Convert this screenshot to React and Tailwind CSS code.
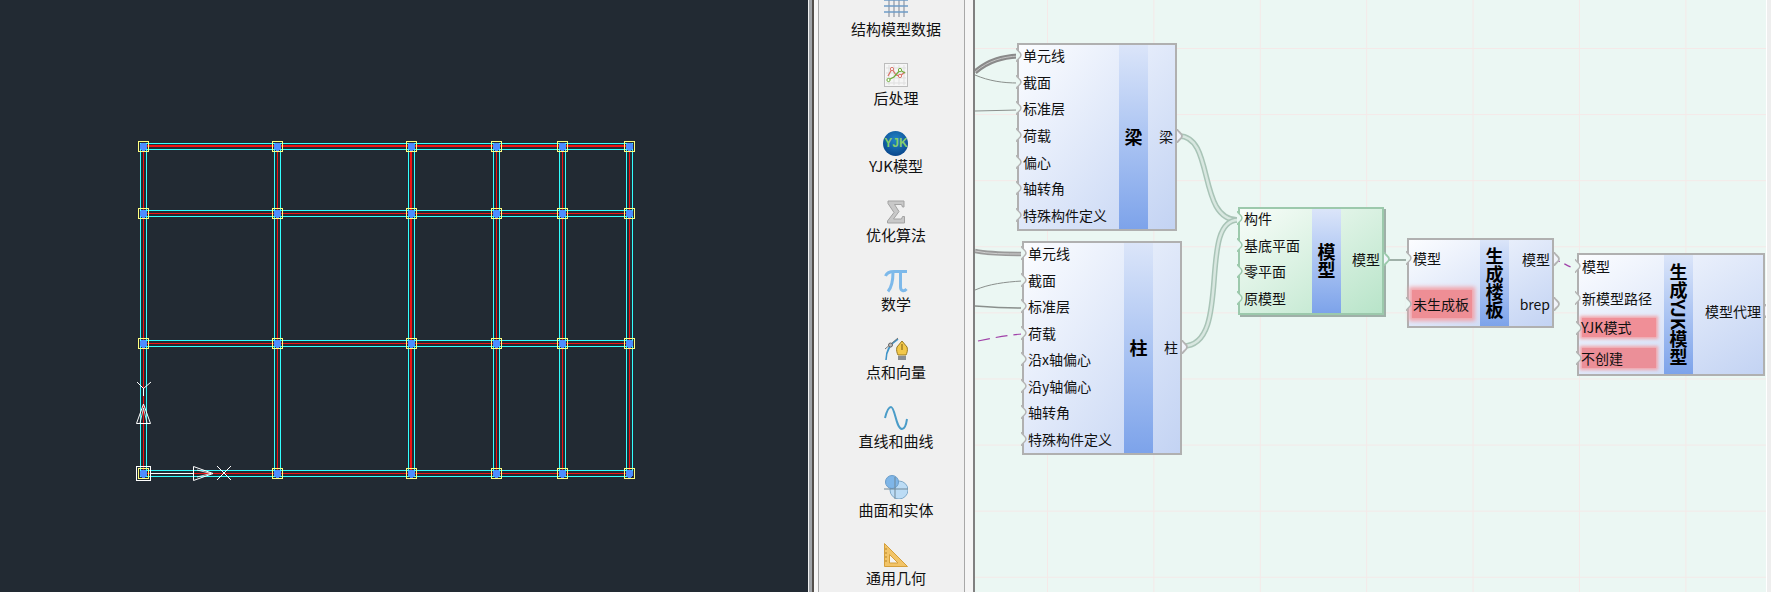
import React from "react";

const colXs = [143, 277, 411, 496, 562, 629];
const rowYs = [146, 213, 343, 473];

function CadGrid() {
  const top = rowYs[0];
  const bottom = rowYs[3];
  const left = colXs[0];
  const right = colXs[5];
  return (
    <svg width="808" height="592" shapeRendering="crispEdges">
      {colXs.map((x, i) => (
        <g key={x}>
          <path d={`M${x - 3 + 0.5} ${top - 3}V${bottom + 3}M${x + 3 + 0.5} ${top - 3}V${bottom + 3}`} stroke="#33ffff" fill="none" />
          <path d={`M${i === 2 ? x : x + 0.5} ${top}V${bottom}`} stroke="#f01414" strokeWidth={i === 2 ? 2 : 1} fill="none" />
        </g>
      ))}
      {rowYs.map((y, i) => (
        <g key={y}>
          <path d={`M${left - 3} ${y - 3 + 0.5}H${right + 3}M${left - 3} ${y + 3 + 0.5}H${right + 3}`} stroke="#33ffff" fill="none" />
          <path d={`M${left} ${i === 0 ? y : y + 0.5}H${right}`} stroke="#f01414" strokeWidth={i === 0 ? 2 : 1} fill="none" />
        </g>
      ))}
      {colXs.map((x) =>
        rowYs.map((y) => (
          <g key={`${x}-${y}`}>
            <path d={`M${x - 2} ${y - 3}h5v1h1v5h-1v1h-1v1h-3v-1h-1v-1h-1v-5h1z`} fill="#4d8dff" />
            <rect x={x - 4.5} y={y - 4.5} width="10" height="10" fill="none" stroke="#ffff80" />
          </g>
        ))
      )}
      {/* ucs icon */}
      <g stroke="#fff" fill="none">
        <rect x="136.5" y="466.5" width="14" height="14" />
        <path d="M143.5 388V396" />
        <path d="M143.5 404L136.5 423.5H150.5Z" shapeRendering="auto" />
        <path d="M143.5 408L140 423M143.5 408L147 423" shapeRendering="auto" strokeWidth="0.8" />
        <path d="M137 382L143.5 388.5L151 382" shapeRendering="auto" />
        <path d="M150 473.5H193" />
        <path d="M193.5 466.5V480.5L213 473.5Z" shapeRendering="auto" />
        <path d="M197 470L211 473.5M197 477L211 473.5" shapeRendering="auto" strokeWidth="0.8" />
        <path d="M217 466L231 480M231 466L217 480" shapeRendering="auto" />
      </g>
    </svg>
  );
}

function GridIcon() {
  return (
    <svg width="24" height="24" viewBox="0 0 24 24" fill="none">
      <path d="M5 0V23M10 0V23M15 0V23M20 0V23" stroke="#8f97a3" strokeWidth="1.2" />
      <path d="M0 6H24M0 12H24M0 18H24" stroke="#6f9cc6" strokeWidth="1.4" />
    </svg>
  );
}

function ChartIcon() {
  return (
    <svg width="24" height="24" viewBox="0 0 24 24" fill="none">
      <rect x="0.5" y="0.5" width="23" height="23" fill="#f6f6f6" stroke="#bdbdbd" />
      <path d="M5 2V22M10 2V22M15 2V22M20 2V22M2 5H22M2 10H22M2 15H22M2 20H22" stroke="#dfdfdf" />
      <path d="M4 13L8 6L12 12L16 13L21 9" stroke="#d9746a" strokeWidth="1.3" />
      <path d="M4 17L10 14L16 7L21 10" stroke="#6fae3c" strokeWidth="1.3" />
      <circle cx="8" cy="6" r="1.6" fill="#fff" stroke="#d9746a" />
      <circle cx="16" cy="13" r="1.6" fill="#fff" stroke="#d9746a" />
      <circle cx="4.500" cy="17" r="1.6" fill="#fff" stroke="#6fae3c" />
      <circle cx="16" cy="7" r="1.6" fill="#fff" stroke="#6fae3c" />
    </svg>
  );
}

function YjkIcon() {
  return (
    <div className="w-[25px] h-[25px] shrink-0 rounded-full bg-[radial-gradient(circle_at_50%_35%,#2285c8,#0a4a90_75%)] flex items-center justify-center text-[12px] leading-none font-bold text-[#86cc6c] font-['Liberation_Sans',sans-serif]">
      YJK
    </div>
  );
}

function SigmaIcon() {
  return (
    <svg width="24" height="24" viewBox="0 0 24 24">
      <path d="M4 1H20V7H18.500L17.500 4.500H10.500L15 11.500L9.500 19H17.500L18.500 16.500H20.500V23H3.500V21L10 12.500L4 3.500Z" fill="#c8c8c8" stroke="#a2a2a2" />
    </svg>
  );
}

function PiIcon() {
  return (
    <svg width="24" height="24" viewBox="0 0 24 24" fill="none" stroke="#7db9ea" strokeWidth="3">
      <path d="M1.500 7C3 3.500 6 2.500 10 2.500H23" />
      <path d="M9 3C9 12 8 18 4 22.500" />
      <path d="M16.500 3V18C16.500 22 20 23 22.500 20" />
    </svg>
  );
}

function PenIcon() {
  return (
    <svg width="24" height="24" viewBox="0 0 24 24" fill="none">
      <path d="M2 23C2 13 6 7 14 2" stroke="#3f94c8" strokeWidth="1.6" />
      <path d="M1 12L14 1" stroke="#777" />
      <circle cx="6.500" cy="8" r="2" fill="#bbb" stroke="#666" />
      <path d="M18 4L23 10C24 13 23 16 22 18H14C13 16 12 13 13 10Z" fill="#f3c84a" stroke="#9a7a20" />
      <path d="M18 7V13" stroke="#7a5c10" />
      <rect x="14" y="19" width="8" height="4" fill="#8a8f94" />
    </svg>
  );
}

function SineIcon() {
  return (
    <svg width="24" height="24" viewBox="0 0 24 24" fill="none">
      <path d="M1 12C3 4 5 1 7 1C11 1 12 23 18 23C20 23 22 20 23 13" stroke="#4a9cc8" strokeWidth="2" />
    </svg>
  );
}

function SolidIcon() {
  return (
    <svg width="24" height="24" viewBox="0 0 24 24" fill="none">
      <circle cx="15" cy="15" r="9" fill="#bcdcf5" stroke="#7fa9c9" />
      <circle cx="8" cy="7" r="6.500" fill="#7fb6e8" stroke="#6a9cc8" />
      <path d="M11 2V24M0 14H24" stroke="#6f8797" />
    </svg>
  );
}

function SquareIcon() {
  return (
    <svg width="24" height="24" viewBox="0 0 24 24" fill="none">
      <path d="M0.500 0.500L23.500 23.500H0.500Z" fill="#f2c468" stroke="#d59f3a" />
      <path d="M5.500 11.500L14 20H5.500Z" fill="#f4f4f4" stroke="#d59f3a" />
      <path d="M1 6H3M1 10H3M1 14H3M1 18H3" stroke="#b98526" />
    </svg>
  );
}

const tools = [
  { label: "结构模型数据", icon: <GridIcon /> },
  { label: "后处理", icon: <ChartIcon /> },
  { label: "YJK模型", icon: <YjkIcon /> },
  { label: "优化算法", icon: <SigmaIcon /> },
  { label: "数学", icon: <PiIcon /> },
  { label: "点和向量", icon: <PenIcon /> },
  { label: "直线和曲线", icon: <SineIcon /> },
  { label: "曲面和实体", icon: <SolidIcon /> },
  { label: "通用几何", icon: <SquareIcon /> },
];

function InGrip({ color = "#b4b4b4" }) {
  return (
    <svg width="6" height="14" viewBox="0 0 6 14" className="absolute -left-[3px] top-px">
      <path d="M0 0C1 3 5 4 5 7C5 10 1 11 0 14" fill="#ebf7f3" stroke={color} strokeWidth="1.5" />
    </svg>
  );
}

function OutGrip({ color = "#b4b4b4" }) {
  return (
    <svg width="6" height="14" viewBox="0 0 6 14" className="absolute -right-[8px] top-px">
      <path d="M0 0C1 3 5 4 5 7C5 10 1 11 0 14" fill="#f1f4fb" stroke={color} strokeWidth="1.8" />
    </svg>
  );
}

function Row({ text, color }) {
  return (
    <div className="relative h-[16px] pl-1 leading-[16px] whitespace-nowrap">
      <InGrip color={color} />
      {text}
    </div>
  );
}

function OutRow({ text, color }) {
  return (
    <div className="relative h-[16px] leading-[16px] whitespace-nowrap text-right pr-[2px]">
      {text}
      <OutGrip color={color} />
    </div>
  );
}

const stripClass =
  "flex items-center justify-center bg-gradient-to-b from-[#dbe5f9] to-[#7da3ea] text-[18px] leading-[18px] font-bold text-black";

const beamInputs = ["单元线", "截面", "标准层", "荷载", "偏心", "轴转角", "特殊构件定义"];
const columnInputs = ["单元线", "截面", "标准层", "荷载", "沿x轴偏心", "沿y轴偏心", "轴转角", "特殊构件定义"];
const modelInputs = ["构件", "基底平面", "零平面", "原模型"];

function Wires() {
  return (
    <svg width="791" height="592" fill="none" className="absolute left-0 top-0">
      {/* bundles coming in from the left */}
      <path d="M0 72C14 60 28 57 43 56" stroke="#8a8a8a" strokeWidth="5" />
      <path d="M0 72C14 60 28 57 43 56" stroke="#c4c4c4" strokeWidth="1" />
      <path d="M0 75C14 81 28 83 43 83" stroke="#8a8f8c" strokeWidth="1" />
      <path d="M0 111L43 110" stroke="#8a8f8c" strokeWidth="1" />
      <path d="M0 251C14 254 30 254 47 254" stroke="#9a9a9a" strokeWidth="4.500" />
      <path d="M0 251C14 254 30 254 47 254" stroke="#d0d0d0" strokeWidth="1" />
      <path d="M0 290C14 284 30 282 47 281" stroke="#8a8f8c" strokeWidth="1" />
      <path d="M0 306C14 307 30 308 47 308" stroke="#8a8f8c" strokeWidth="1.500" />
      <path d="M3 341C18 338 32 335 47 334" stroke="#a040a8" strokeWidth="1.200" strokeDasharray="12 6" />
      {/* beam and column into model */}
      <path d="M204 136C240 136 222 220 263 220" stroke="#a9c4b7" strokeWidth="5.500" />
      <path d="M204 136C240 136 222 220 263 220" stroke="#d8e7e0" strokeWidth="2.500" />
      <path d="M208 346C258 346 222 220 263 220" stroke="#a9c4b7" strokeWidth="5.500" />
      <path d="M208 346C258 346 222 220 263 220" stroke="#d8e7e0" strokeWidth="2.500" />
      {/* model to slab, slab to yjk */}
      <path d="M410 260H432" stroke="#9fb0a8" strokeWidth="2" />
      <path d="M578 260C586 260 592 267 602 269" stroke="#a040a8" strokeWidth="1.200" strokeDasharray="7 5" />
    </svg>
  );
}

function Canvas() {
  return (
    <div className="relative w-[791px] h-full overflow-hidden bg-[#ebf7f3] bg-[linear-gradient(#f5e9e8_1px,transparent_1px),linear-gradient(90deg,#f5e9e8_1px,transparent_1px)] bg-size-[106.4px_66.1px] bg-position-[72px_48px] text-[14px] text-[#111]">
      <Wires />

      <div className="absolute left-[42px] top-[43px] w-[160px] h-[188px] flex border-2 border-[#b0b0b0] bg-gradient-to-br from-[#fcfdff] to-[#c3d3f3]">
        <div className="flex-1 flex flex-col gap-[10.67px] pt-[2px]">
          {beamInputs.map((t, i) => (
            <Row key={i} text={t} />
          ))}
        </div>
        <div className={`w-[29px] pb-[3px] ${stripClass}`}>梁</div>
        <div className="w-[27px] flex flex-col justify-center pb-[3px]">
          <OutRow text="梁" />
        </div>
      </div>

      <div className="absolute left-[47px] top-[241px] w-[160px] h-[214px] flex border-2 border-[#b0b0b0] bg-gradient-to-br from-[#fcfdff] to-[#c3d3f3]">
        <div className="flex-1 flex flex-col gap-[10.5px] pt-[2px]">
          {columnInputs.map((t, i) => (
            <Row key={i} text={t} />
          ))}
        </div>
        <div className={`w-[29px] pb-[3px] ${stripClass}`}>柱</div>
        <div className="w-[27px] flex flex-col justify-center pb-[3px]">
          <OutRow text="柱" />
        </div>
      </div>

      <div className="absolute left-[263px] top-[207px] w-[146px] h-[108px] flex border-2 border-[#9cc9ac] bg-gradient-to-br from-[#f8fdf9] to-[#b8e4c9] shadow-[2px_2px_0_#9fb0a8]">
        <div className="flex-1 flex flex-col gap-[10.67px] pt-[1px]">
          {modelInputs.map((t, i) => (
            <Row key={i} text={t} color="#9cc9ac" />
          ))}
        </div>
        <div className={`w-[29px] ${stripClass}`}>
          <span className="[writing-mode:vertical-rl]">模型</span>
        </div>
        <div className="w-[41px] flex flex-col justify-center pb-1">
          <OutRow text="模型" color="#9cc9ac" />
        </div>
      </div>

      <div className="absolute left-[432px] top-[238px] w-[147px] h-[90px] flex border-2 border-[#b0b0b0] bg-gradient-to-br from-[#fcfdff] to-[#c3d3f3]">
        <div className="flex-1 flex flex-col pt-[10px]">
          <Row text="模型" />
          <div className="relative mt-[24px] ml-[3px] mr-[8px] h-[28px] px-px leading-[28px] whitespace-nowrap bg-[#ee8e95] shadow-[0_0_4px_3px_#f2a5ab]">
            <svg width="6" height="14" viewBox="0 0 6 14" className="absolute -left-[6px] top-[7px]">
              <path d="M0 0C1 3 5 4 5 7C5 10 1 11 0 14" fill="#ebf7f3" stroke="#b4b4b4" strokeWidth="1.5" />
            </svg>
            未生成板
          </div>
        </div>
        <div className={`w-[29px] ${stripClass}`}>
          <span className="[writing-mode:vertical-rl]">生成楼板</span>
        </div>
        <div className="w-[43px] flex flex-col pt-[11px] gap-[29px]">
          <OutRow text="模型" />
          <OutRow text="brep" />
        </div>
      </div>

      <div className="absolute left-[602px] top-[253px] w-[188px] h-[123px] flex border-2 border-[#b0b0b0] bg-gradient-to-br from-[#fcfdff] to-[#c3d3f3]">
        <div className="flex-1 flex flex-col pt-[3px]">
          <div className="-ml-px">
            <Row text="模型" />
          </div>
          <div className="mt-[16px] -ml-px">
            <Row text="新模型路径" />
          </div>
          <div className="relative mt-[12px] ml-[3px] mr-[8px] h-[19px] -indent-px leading-[19px] whitespace-nowrap bg-[#f08f97] shadow-[0_0_3px_2px_#f2a5ab]">
            <svg width="6" height="14" viewBox="0 0 6 14" className="absolute -left-[6px] top-[3px]">
              <path d="M0 0C1 3 5 4 5 7C5 10 1 11 0 14" fill="#ebf7f3" stroke="#b4b4b4" strokeWidth="1.5" />
            </svg>
            YJK模式
          </div>
          <div className="relative mt-[11px] ml-[3px] mr-[8px] h-[20px] -indent-px leading-[20px] whitespace-nowrap bg-[#eb8f98] shadow-[0_0_3px_2px_#f2a5ab]">
            <svg width="6" height="14" viewBox="0 0 6 14" className="absolute -left-[6px] top-[3px]">
              <path d="M0 0C1 3 5 4 5 7C5 10 1 11 0 14" fill="#ebf7f3" stroke="#b4b4b4" strokeWidth="1.5" />
            </svg>
            不创建
          </div>
        </div>
        <div className={`w-[29px] pb-[1px] ${stripClass}`}>
          <span className="[writing-mode:vertical-rl]">生成YJK模型</span>
        </div>
        <div className="w-[70px] flex flex-col justify-center pb-[8px]">
          <OutRow text="模型代理" />
        </div>
      </div>
    </div>
  );
}

export default function App() {
  return (
    <div className="flex w-[1771px] h-[592px] overflow-hidden font-['Noto_Sans_CJK_SC','Liberation_Sans',sans-serif]">
      {/* cad view */}
      <div className="w-[808px] h-full bg-[#222a33]">
        <CadGrid />
      </div>

      {/* splitter */}
      <div className="w-px h-full bg-[#f0f0f0]" />
      <div className="w-[3px] h-full bg-[#a0a4a8]" />
      <div className="w-[2px] h-full bg-[#54504c]" />
      <div className="w-[4px] h-full bg-[#f8f8f8]" />

      {/* tool list */}
      <div className="w-[147px] h-full border-x border-[#a8a8a8] bg-[#f0f0f0] overflow-hidden pl-[9px]">
        <div className="-mt-[6px] flex flex-col items-center gap-[23.67px]">
          {tools.map((tool) => (
            <div key={tool.label} className="flex flex-col items-center">
              <div className="w-[24px] h-[24px] flex items-center justify-center">{tool.icon}</div>
              <div className="mt-px h-[20px] text-[15px] leading-[20px] text-[#111] whitespace-nowrap">{tool.label}</div>
            </div>
          ))}
        </div>
      </div>
      <div className="w-[8px] h-full bg-[#f5f5f5]" />
      <div className="w-[2px] h-full bg-[#808080]" />

      <Canvas />

      <div className="w-px h-full bg-white" />
      <div className="flex-1 h-full bg-[#eeeeee]" />
    </div>
  );
}
